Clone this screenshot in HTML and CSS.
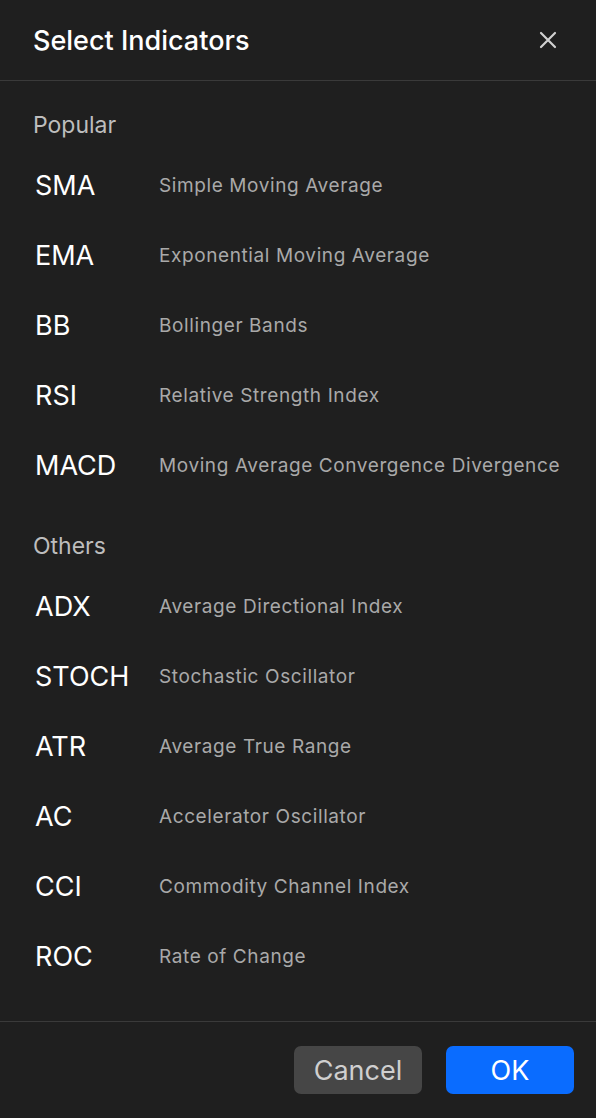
FILE: index.html
```html
<!DOCTYPE HTML>
<html>
<head>
  <meta name="viewport" content="width=device-width, initial-scale=1">
  <title>Select Indicators</title>
  <link rel="stylesheet" href="styles.css">
</head>
<body>
  <div class="dialog">
    <div class="header">
      <h1>Select Indicators</h1>
      <button class="close" aria-label="Close">
        <svg width="18" height="18" viewBox="0 0 18 18">
          <path d="M2 2 L16 16 M16 2 L2 16" stroke="#d0d0d0" stroke-width="2.2" stroke-linecap="round"/>
        </svg>
      </button>
    </div>

    <div class="content">
      <div class="section">
        <div class="section-title">Popular</div>
        <div class="row"><span class="abbr">SMA</span><span class="desc">Simple Moving Average</span></div>
        <div class="row"><span class="abbr">EMA</span><span class="desc">Exponential Moving Average</span></div>
        <div class="row"><span class="abbr">BB</span><span class="desc">Bollinger Bands</span></div>
        <div class="row"><span class="abbr">RSI</span><span class="desc">Relative Strength Index</span></div>
        <div class="row"><span class="abbr">MACD</span><span class="desc">Moving Average Convergence Divergence</span></div>
      </div>

      <div class="section others">
        <div class="section-title">Others</div>
        <div class="row"><span class="abbr">ADX</span><span class="desc">Average Directional Index</span></div>
        <div class="row"><span class="abbr">STOCH</span><span class="desc">Stochastic Oscillator</span></div>
        <div class="row"><span class="abbr">ATR</span><span class="desc">Average True Range</span></div>
        <div class="row"><span class="abbr">AC</span><span class="desc">Accelerator Oscillator</span></div>
        <div class="row"><span class="abbr">CCI</span><span class="desc">Commodity Channel Index</span></div>
        <div class="row"><span class="abbr">ROC</span><span class="desc">Rate of Change</span></div>
      </div>
    </div>

    <div class="footer">
      <button class="button cancel">Cancel</button>
      <button class="button ok">OK</button>
    </div>
  </div>
</body>
</html>
```

FILE: styles.css
```css
html, body {
  margin: 0;
  padding: 0;
  height: 100%;
}

body {
  font-family: Inter, "Liberation Sans", Arial, sans-serif;
  background-color: #1f1f1f;
  color: #fff;
}

.dialog {
  display: flex;
  flex-direction: column;
  height: 100%;
}

.header {
  display: flex;
  align-items: center;
  justify-content: space-between;
  height: 80px;
  padding: 0 30px 0 33px;
  border-bottom: 1px solid #3a3a3a;
}

.header h1 {
  margin: 0;
  font-size: 27px;
  font-weight: 500;
  color: #fff;
}

.close {
  display: flex;
  align-items: center;
  justify-content: center;
  width: 36px;
  height: 36px;
  padding: 0;
  background: none;
  border: none;
  cursor: pointer;
}

.content {
  flex: 1;
  padding: 19px 0 0 35px;
}

.section-title {
  height: 50px;
  line-height: 50px;
  margin-left: -2px;
  font-size: 23px;
  color: #bdbdbd;
}

.others {
  margin-top: 21px;
}

.row {
  display: flex;
  align-items: center;
  height: 70px;
}

.abbr {
  width: 124px;
  font-size: 27px;
  color: #fff;
}

.desc {
  font-size: 19px;
  letter-spacing: 0.6px;
  color: #a9a9a9;
}

.footer {
  display: flex;
  justify-content: flex-end;
  gap: 24px;
  padding: 24px 22px 24px 0;
  border-top: 1px solid #3a3a3a;
}

.button {
  width: 128px;
  height: 48px;
  font-family: inherit;
  font-size: 27px;
  border: none;
  border-radius: 7px;
  cursor: pointer;
}

.button.cancel {
  background-color: #464646;
  color: #cfcfcf;
}

.button.ok {
  background-color: #0a6cff;
  color: #fff;
}
```
